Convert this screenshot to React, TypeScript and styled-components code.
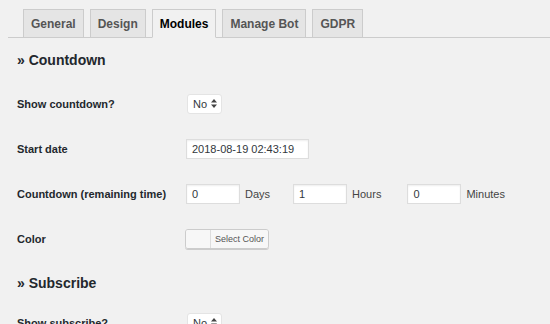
import React from "react";
import styled, { createGlobalStyle } from "styled-components";

const GlobalStyle = createGlobalStyle`
  html, body {
    margin: 0;
    padding: 0;
    background: #f1f1f1;
  }
  body {
    font-family: "Liberation Sans", Arial, sans-serif;
    color: #23282d;
    font-size: 11px;
  }
`;

const Wrapper = styled.div`
  width: 550px;
  height: 324px;
  overflow: hidden;
  background: #f1f1f1;
`;

const TabNav = styled.nav`
  display: flex;
  margin: 9px 0 0 8px;
  padding-left: 15px;
  border-bottom: 1px solid #ccc;
  height: 28px;
`;

const Tab = styled.a<{ $active?: boolean }>`
  display: flex;
  align-items: center;
  box-sizing: border-box;
  height: ${(p) => (p.$active ? "29px" : "28px")};
  margin-left: 6px;
  padding: 0 7px;
  font-size: 12px;
  font-weight: bold;
  border: 1px solid #ccc;
  border-bottom: ${(p) => (p.$active ? "1px solid #f1f1f1" : "none")};
  background: ${(p) => (p.$active ? "#f1f1f1" : "#e5e5e5")};
  color: ${(p) => (p.$active ? "#000" : "#555")};
  text-decoration: none;
  &:first-child {
    margin-left: 0;
  }
`;

const Content = styled.div`
  padding: 0 17px;
`;

const SectionTitle = styled.h2<{ $top: number; $bottom: number }>`
  margin: 0;
  padding: ${(p) => p.$top}px 0 ${(p) => p.$bottom}px;
  font-size: 14px;
  font-weight: bold;
  color: #23282d;
  line-height: 18px;
`;

const Row = styled.div`
  display: grid;
  grid-template-columns: 169px 1fr;
  align-items: center;
  height: 45px;
`;

const Label = styled.div`
  font-weight: bold;
  font-size: 11px;
  color: #23282d;
`;

const Field = styled.div`
  display: flex;
  align-items: center;
`;

const Select = styled.div`
  display: flex;
  align-items: center;
  gap: 4px;
  box-sizing: border-box;
  height: 20px;
  margin-left: 1px;
  padding: 0 4px 0 5px;
  background: #fff;
  border: 1px solid #e4e4e4;
  border-radius: 3px;
  font-size: 11px;
  color: #32373c;
`;

const Input = styled.div<{ $w: number }>`
  box-sizing: border-box;
  width: ${(p) => p.$w}px;
  height: 20px;
  padding: 0 5px;
  display: flex;
  align-items: center;
  background: #fff;
  border: 1px solid #ddd;
  box-shadow: inset 0 1px 2px rgba(0, 0, 0, 0.07);
  font-size: 11px;
  color: #32373c;
`;

const Unit = styled.span<{ $gap?: number }>`
  margin-left: 5px;
  margin-right: ${(p) => p.$gap ?? 0}px;
  font-size: 11px;
  color: #444;
`;

const ColorButton = styled.div`
  display: flex;
  box-sizing: border-box;
  height: 20px;
  border: 1px solid #ccc;
  border-radius: 3px;
  box-shadow: 0 1px 0 #ccc;
  overflow: hidden;
  margin-left: -1px;
`;

const Swatch = styled.span`
  width: 24px;
  background: #f7f7f7;
  border-right: 1px solid #ddd;
`;

const ColorText = styled.span`
  display: flex;
  align-items: center;
  padding: 0 4px 0 4px;
  font-size: 9px;
  color: #555;
  background: #f7f7f7;
`;

function Arrows() {
  return (
    <svg width="6" height="9" viewBox="0 0 6 9">
      <path d="M3 0 L6 3.5 H0 Z M3 9 L0 5.5 H6 Z" fill="#444" />
    </svg>
  );
}

const tabs = ["General", "Design", "Modules", "Manage Bot", "GDPR"];

export default function App() {
  return (
    <>
      <GlobalStyle />
      <Wrapper>
        <TabNav>
          {tabs.map((t) => (
            <Tab key={t} $active={t === "Modules"}>
              {t}
            </Tab>
          ))}
        </TabNav>
        <Content>
          <SectionTitle $top={13} $bottom={12}>» Countdown</SectionTitle>
          <Row>
            <Label>Show countdown?</Label>
            <Field>
              <Select>
                No <Arrows />
              </Select>
            </Field>
          </Row>
          <Row>
            <Label>Start date</Label>
            <Field>
              <Input $w={123}>2018-08-19 02:43:19</Input>
            </Field>
          </Row>
          <Row>
            <Label>Countdown (remaining time)</Label>
            <Field>
              <Input $w={54}>0</Input>
              <Unit $gap={23}>Days</Unit>
              <Input $w={54}>1</Input>
              <Unit $gap={26}>Hours</Unit>
              <Input $w={54}>0</Input>
              <Unit>Minutes</Unit>
            </Field>
          </Row>
          <Row>
            <Label>Color</Label>
            <Field>
              <ColorButton>
                <Swatch />
                <ColorText>Select Color</ColorText>
              </ColorButton>
            </Field>
          </Row>
          <SectionTitle $top={13} $bottom={8}>» Subscribe</SectionTitle>
          <Row>
            <Label>Show subscribe?</Label>
            <Field>
              <Select>
                No <Arrows />
              </Select>
            </Field>
          </Row>
        </Content>
      </Wrapper>
    </>
  );
}
